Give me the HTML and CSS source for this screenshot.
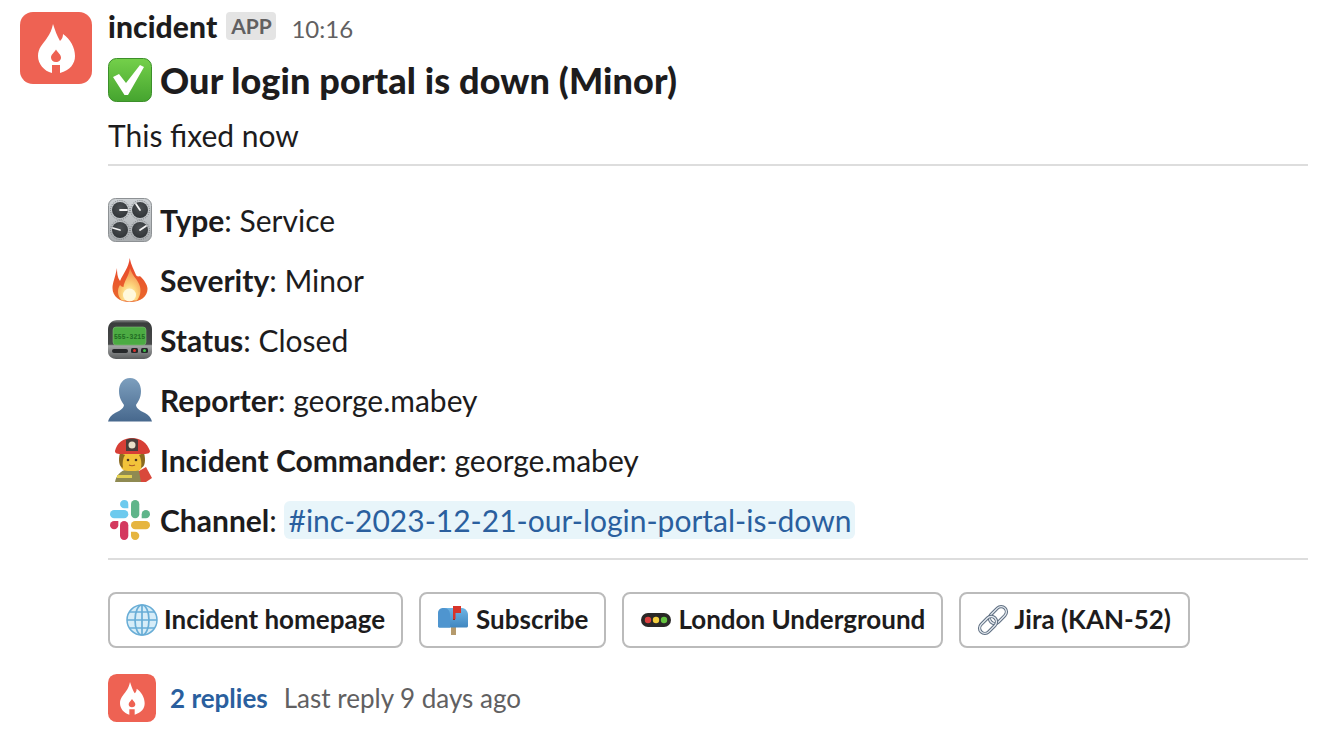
FILE: index.html
```html
<!DOCTYPE html>
<html lang="en">
<head>
<meta charset="utf-8">
<title>incident</title>
<link rel="stylesheet" href="styles.css">
</head>
<body>
<svg class="defs" width="0" height="0" aria-hidden="true">
  <defs>
    <symbol id="flame" viewBox="0 0 72 72">
      <rect width="72" height="72" rx="13" fill="#ee6253"/>
      <path d="M33 12C35 18 37 24 40 29C42 27 43 25 43 22C50 27 55 35 55 44C55 52 50 58 40 61V53H32V61C24 59 18 52 18 44C18 36 23 32 27 26C30 22 32 17 33 12Z" fill="#fff"/>
      <path d="M36 37.500C38 41 41 42.500 41 45.500C41 48 39 50 36 50C33 50 31 48 31 45.500C31 42.500 34 41 36 37.500Z" fill="#ee6253"/>
    </symbol>
    <linearGradient id="greenG" x1="0" y1="0" x2="0" y2="1"><stop offset="0" stop-color="#74d04a"/><stop offset="1" stop-color="#45a42f"/></linearGradient>
    <linearGradient id="greyG" x1="0" y1="0" x2="0" y2="1"><stop offset="0" stop-color="#cfd3d6"/><stop offset="1" stop-color="#a9adb0"/></linearGradient>
    <linearGradient id="fireG" x1="0" y1="0" x2="0" y2="1"><stop offset="0" stop-color="#e8452c"/><stop offset="1" stop-color="#ea6a2c"/></linearGradient>
    <radialGradient id="fireIn" cx=".5" cy=".85" r=".8"><stop offset="0" stop-color="#fffbe0"/><stop offset=".4" stop-color="#fdd77e"/><stop offset="1" stop-color="#f58a4a"/></radialGradient>
    <linearGradient id="personG" x1="0" y1="0" x2="0" y2="1"><stop offset="0" stop-color="#7d9fbe"/><stop offset="1" stop-color="#47688d"/></linearGradient>
    <linearGradient id="pagerG" x1="0" y1="0" x2="0" y2="1"><stop offset="0" stop-color="#8f9191"/><stop offset=".08" stop-color="#3a3d3d"/><stop offset=".62" stop-color="#474949"/><stop offset=".66" stop-color="#a5a7a7"/><stop offset="1" stop-color="#5a5c5d"/></linearGradient>
    <linearGradient id="boxG" x1="0" y1="0" x2="0" y2="1"><stop offset="0" stop-color="#6eb4e4"/><stop offset="1" stop-color="#3f86c0"/></linearGradient>
    <radialGradient id="knobG" cx=".5" cy=".35" r=".7"><stop offset="0" stop-color="#4c5053"/><stop offset="1" stop-color="#2f3336"/></radialGradient>

    <symbol id="check" viewBox="0 0 44 44">
      <rect x=".5" y=".5" width="43" height="43" rx="8" fill="url(#greenG)" stroke="#3c8f2a"/>
      <path d="M5 19L11 16L18 25L32 7L36 9L20 37H16.500Z" fill="#fff"/>
    </symbol>
    <symbol id="knobs" viewBox="0 0 44 44">
      <rect x=".5" y=".5" width="43" height="43" rx="7" fill="url(#greyG)" stroke="#8d9194"/>
      <g fill="none" stroke="#6c7073" stroke-width="1" stroke-dasharray=".8 1.400">
        <circle cx="12" cy="12" r="9.500"/><circle cx="32" cy="12" r="9.500"/><circle cx="12" cy="32" r="9.500"/><circle cx="32" cy="32" r="9.500"/>
      </g>
      <g fill="url(#knobG)">
        <circle cx="12" cy="12" r="8"/><circle cx="32" cy="12" r="8"/><circle cx="12" cy="32" r="8"/><circle cx="32" cy="32" r="8"/>
      </g>
      <g stroke="#f4f4f4" stroke-width="1.800" stroke-linecap="round">
        <path d="M12 12H19"/><path d="M32 12L28 6"/><path d="M12 32L5 30"/><path d="M32 32L38 28"/>
      </g>
    </symbol>
    <symbol id="fire" viewBox="0 0 44 44">
      <path d="M21.700 0C23 7 26 12 28 17C30 20 32 17 33 19C36 22 39.500 27 39.500 31C39.500 38 33 44 22 44C11 44 4.500 38 4.500 30C4.500 25 7 20 9 10C9 17 10 20 12 23C15 16 21 9 21.700 0Z" fill="url(#fireG)"/>
      <path d="M22 10C24 17 28 20 30 24C33 29 34 36 29 42.500H14C9 38 9 31 12 27C13 28 14 29 15.500 29C16 23 21 18 22 10Z" fill="url(#fireIn)"/>
      <ellipse cx="21.500" cy="37" rx="6.500" ry="6.500" fill="#fff9dc"/>
    </symbol>
    <symbol id="pager" viewBox="0 0 44 44">
      <path d="M9 2H35C40 2 44 6 44 11V34C44 38 40 41 36 41H8C4 41 0 38 0 34V11C0 6 4 2 9 2Z" fill="url(#pagerG)"/>
      <rect x="5" y="9" width="33" height="18" rx="3" fill="#4cab43" stroke="#7fbb75" stroke-width=".6"/>
      <text class="pager-txt" x="21.500" y="20.500">555-3215</text>
      <rect x="4" y="31" width="16" height="4" rx="2" fill="#26282a"/>
      <rect x="23" y="30" width="7" height="5" rx="1.500" fill="#26282a"/><circle cx="26.500" cy="32.500" r="1.500" fill="#d8322e"/>
      <rect x="33" y="30" width="7" height="5" rx="1.500" fill="#26282a"/><circle cx="36.500" cy="32.500" r="1.500" fill="#3fc04a"/>
    </symbol>
    <symbol id="person" viewBox="0 0 44 44">
      <path d="M22 0C29 0 33 6 33 13C33 20 30 24 28 27C28.500 31 33 33 37 35C41 37 43 40 44 43.500H0C1 40 3 37 7 35C11 33 15.500 31 16 27C14 24 11 20 11 13C11 6 15 0 22 0Z" fill="url(#personG)"/>
    </symbol>
    <symbol id="firefighter" viewBox="0 0 44 44">
      <path d="M7 44C8 38 12 33 19 31H28C33 33 36 37 37 44Z" fill="#8f8a52"/>
      <path d="M9 37H24V40H9Z" fill="#e2cf52"/>
      <path d="M14 13H34V28C34 33 29 33 24 33C19 33 13 33 13 28Z" fill="#f2c33a"/>
      <path d="M12 15C10 22 11 29 15 30C14 25 15 20 17 17Z" fill="#8a6a20"/>
      <path d="M36 15C38 22 37 29 33 30C34 25 33 20 31 17Z" fill="#8a6a20"/>
      <circle cx="20" cy="22" r="1.300" fill="#4a3420"/><circle cx="28" cy="22" r="1.300" fill="#4a3420"/>
      <path d="M21 27C23 28 25 28 27 27" stroke="#a8572a" stroke-width="1.200" fill="none"/>
      <path d="M31 33L38 29L44 40L38 44H33Z" fill="#d9483b"/>
      <path d="M7 13C9 5 15 0 24 0C33 0 39 5 42 13C42 17 35 16 24 16C13 16 7 17 7 13Z" fill="#d73f36"/>
      <path d="M18 2C20 0 28 0 30 2V13H18Z" fill="#4a3d39"/>
      <circle cx="24" cy="7" r="3.500" fill="#e9e0c8"/>
    </symbol>
    <symbol id="slack" viewBox="0 0 44 44">
      <rect x="2" y="12" width="18.300" height="8.300" rx="4.150" fill="#6dcaee"/>
      <path d="M16.200 2A4.150 4.150 0 0 1 20.300 6.150V10.300H16.200A4.150 4.150 0 0 1 16.200 2Z" fill="#6dcaee"/>
      <rect x="23" y="2" width="8.300" height="18.300" rx="4.150" fill="#5fb58a"/>
      <path d="M33.700 16.150A4.150 4.150 0 1 1 37.850 20.300H33.700Z" fill="#5fb58a"/>
      <rect x="12" y="23" width="8.300" height="19" rx="4.150" fill="#d4395f"/>
      <path d="M2 27.150A4.150 4.150 0 0 1 6.150 23H10.300V27.150A4.150 4.150 0 0 1 2 27.150Z" fill="#d4395f"/>
      <rect x="23" y="23" width="19" height="8.300" rx="4.150" fill="#e6b540"/>
      <path d="M23 33.700H27.150A4.150 4.150 0 1 1 23 37.850Z" fill="#e6b540"/>
    </symbol>
    <symbol id="globe" viewBox="0 0 32 32">
      <circle cx="16" cy="16" r="15" fill="#d7edf8" stroke="#68add6" stroke-width="1.500"/>
      <g fill="none" stroke="#68add6" stroke-width="1.700">
        <ellipse cx="16" cy="16" rx="7" ry="15"/><path d="M16 1V31M1 16H31M3.500 8H28.500M3.500 24H28.500"/>
      </g>
    </symbol>
    <symbol id="mailbox" viewBox="0 0 32 32">
      <rect x="14" y="22" width="5" height="9" fill="#b59a6c"/>
      <path d="M7 4H25C29 4 31 8 31 11V22C31 23 30 23.500 29 23.500H3C2 23.500 1 23 1 22V10C1 6 3 4 7 4Z" fill="url(#boxG)"/>
      <path d="M7 4C11 4 13 7 13 11V23.500H3C2 23.500 1 23 1 22V10C1 6 3 4 7 4Z" fill="#4f95cf"/>
      <path d="M16 2H18V16H16Z" fill="#9c2b24"/>
      <path d="M16 2H24V9H18.500V15H16Z" fill="#d7342a"/>
    </symbol>
    <symbol id="lights" viewBox="0 0 32 32">
      <rect x="1" y="9" width="30" height="14" rx="7" fill="#2a2827"/>
      <circle cx="8" cy="16" r="3.200" fill="#dc3f3f"/><circle cx="16" cy="16" r="3.200" fill="#f3cf3d"/><circle cx="24" cy="16" r="3.200" fill="#63c33f"/>
    </symbol>
    <symbol id="link" viewBox="0 0 32 32">
      <g fill="none" transform="rotate(45 16 16)">
        <rect x="10.750" y="-.75" width="10.500" height="19.500" rx="5.250" stroke="#5f6f82" stroke-width="3.400"/>
        <rect x="10.750" y="-.75" width="10.500" height="19.500" rx="5.250" stroke="#e6ebf1" stroke-width="1.300"/>
        <rect x="10.750" y="13.250" width="10.500" height="19.500" rx="5.250" stroke="#5f6f82" stroke-width="3.400"/>
        <rect x="10.750" y="13.250" width="10.500" height="19.500" rx="5.250" stroke="#e6ebf1" stroke-width="1.300"/>
      </g>
    </symbol>
  </defs>
</svg>

<main class="message">
  <svg class="avatar"><use href="#flame"/></svg>
  <div class="content">
    <div class="meta">
      <span class="name">incident</span>
      <span class="badge">APP</span>
      <span class="time">10:16</span>
    </div>
    <h1 class="title"><svg class="emoji"><use href="#check"/></svg><span>Our login portal is down (Minor)</span></h1>
    <p class="summary">This fixed now</p>
    <hr class="rule">
    <ul class="fields">
      <li class="field"><svg class="emoji"><use href="#knobs"/></svg><span><b>Type</b>: Service</span></li>
      <li class="field"><svg class="emoji"><use href="#fire"/></svg><span><b>Severity</b>: Minor</span></li>
      <li class="field"><svg class="emoji"><use href="#pager"/></svg><span><b>Status</b>: Closed</span></li>
      <li class="field"><svg class="emoji"><use href="#person"/></svg><span><b>Reporter</b>: george.mabey</span></li>
      <li class="field"><svg class="emoji"><use href="#firefighter"/></svg><span><b>Incident Commander</b>: george.mabey</span></li>
      <li class="field"><svg class="emoji"><use href="#slack"/></svg><span><b>Channel</b>: <a class="channel" href="#">#inc-2023-12-21-our-login-portal-is-down</a></span></li>
    </ul>
    <hr class="rule rule-lower">
    <div class="actions">
      <button class="btn"><svg class="btn-icon"><use href="#globe"/></svg>Incident homepage</button>
      <button class="btn btn-wide"><svg class="btn-icon"><use href="#mailbox"/></svg>Subscribe</button>
      <button class="btn"><svg class="btn-icon"><use href="#lights"/></svg>London Underground</button>
      <button class="btn btn-link"><svg class="btn-icon"><use href="#link"/></svg>Jira (KAN-52)</button>
    </div>
    <div class="thread">
      <svg class="thread-avatar"><use href="#flame"/></svg>
      <a class="replies" href="#">2 replies</a>
      <span class="last">Last reply 9 days ago</span>
    </div>
  </div>
</main>
</body>
</html>
```
FILE: styles.css
```css
* { box-sizing: border-box; }
html, body { margin: 0; padding: 0; background: #fff; }
body {
  width: 1334px;
  height: 734px;
  overflow: hidden;
  font-family: Lato, "Noto Sans", sans-serif;
  color: #1d1c1d;
}
.defs { position: absolute; }
.pager-txt { font: 700 6.500px "Liberation Mono", monospace; fill: #1f6a22; text-anchor: middle; }
.message { display: flex; padding: 12px 26px 0 20px; }
.avatar { width: 72px; height: 72px; flex: none; margin-right: 16px; }
.content { flex: 1; min-width: 0; }
.meta { display: flex; align-items: center; height: 28px; }
.name { font-size: 30px; font-weight: 900; line-height: 28px; letter-spacing: .12px; }
.badge {
  margin-left: 9px;
  width: 50px;
  height: 28px;
  border-radius: 4px;
  background: #e4e4e4;
  color: #616061;
  font-size: 21px;
  font-weight: 700;
  line-height: 28px;
  text-align: center;
}
.time { margin-left: 15px; font-size: 24px; color: #616061; margin-top: 4px; }
.title {
  display: flex;
  align-items: center;
  gap: 8px;
  margin: 17px 0 0;
  height: 46px;
  font-size: 36px;
  font-weight: 900;
  line-height: 46px;
  letter-spacing: .13px;
}
.emoji { width: 44px; height: 44px; flex: none; }
.summary { margin: 10px 0 0; font-size: 30px; line-height: 44px; }
.rule { margin: 7px 0 0; border: 0; height: 2px; background: #dddddd; }
.fields { list-style: none; margin: 24px 0 0; padding: 0; }
.field {
  display: flex;
  align-items: center;
  gap: 8px;
  height: 60px;
  font-size: 30px;
}
.field b { font-weight: 700; }
.channel {
  margin-left: -1px;
  padding: 1px 4px 1px 5px;
  border-radius: 6px;
  background: #e8f5fa;
  color: #2a5f9e;
  text-decoration: none;
}
.rule-lower { margin-top: 8px; }
.actions { display: flex; gap: 16px; margin-top: 32px; }
.btn {
  display: flex;
  align-items: center;
  gap: 6px;
  height: 56px;
  padding: 0 16px 2px;
  border: 2px solid #bbbbbb;
  border-radius: 8px;
  background: #fff;
  color: #1d1c1d;
  font: 700 26px Lato, sans-serif;
}
.btn-wide { gap: 7px; }
.btn-link { gap: 5px; padding-right: 17px; }
.btn-icon { width: 32px; height: 32px; flex: none; margin-top: 2px; }
.thread { display: flex; align-items: center; margin-top: 26px; height: 48px; font-size: 26px; }
.thread-avatar { width: 48px; height: 48px; margin-right: 14px; }
.replies { color: #2a5f9e; font-weight: 700; text-decoration: none; }
.last { margin-left: 16px; color: #616061; }
```
